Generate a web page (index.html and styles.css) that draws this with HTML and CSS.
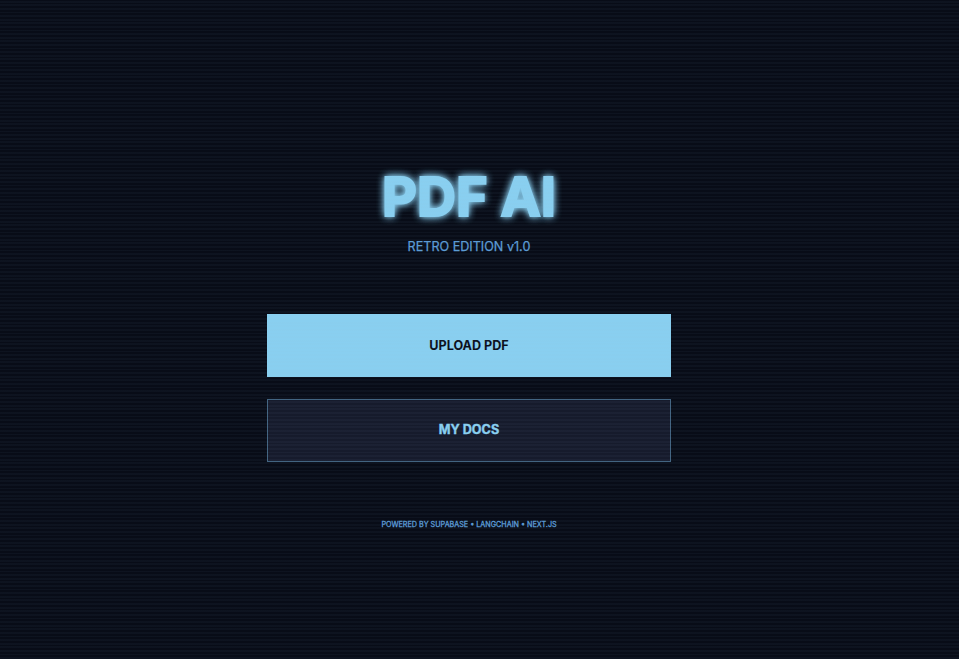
FILE: index.html
```html
<!DOCTYPE html>
<html lang="en">
<head>
<meta charset="utf-8">
<title>PDF AI</title>
<link rel="stylesheet" href="styles.css">
</head>
<body>
<main class="screen">
  <header class="masthead">
    <h1 class="title">PDF AI</h1>
    <p class="subtitle">RETRO EDITION v1.0</p>
  </header>
  <nav class="actions">
    <button class="btn primary">UPLOAD PDF</button>
    <button class="btn secondary">MY DOCS</button>
  </nav>
  <footer class="credits">POWERED BY SUPABASE • LANGCHAIN • NEXT.JS</footer>
</main>
</body>
</html>
```
FILE: styles.css
```css
* { box-sizing: border-box; }
html, body { margin: 0; height: 100%; overflow: hidden; }
body {
  background: #080c17;
  font-family: Inter, "Liberation Sans", sans-serif;
}
/* Scanlines over the whole screen */
body::after {
  content: "";
  position: fixed;
  inset: 0;
  pointer-events: none;
  background: repeating-linear-gradient(0deg, rgba(150,190,220,.045) 0 1.8px, transparent 1.8px 3.607px);
}
.screen {
  width: 938px;
  height: 100%;
  padding-top: 170px;
  display: flex;
  flex-direction: column;
  align-items: center;
}
.masthead { text-align: center; }
.title {
  margin: 0;
  font-size: 54px;
  line-height: 54px;
  font-weight: 700;
  color: #89cff0;
  -webkit-text-stroke: 2px #89cff0;
  text-shadow: 0 0 9px #89cff0, 0 0 9px #89cff0, 0 0 4px rgba(137,207,240,.6);
}
.subtitle {
  margin: 14px 0 0;
  font-size: 12.6px;
  line-height: 18px;
  color: #5b9bd5;
  -webkit-text-stroke: .25px #5b9bd5;
}
.actions {
  width: 404px;
  margin-top: 58px;
  display: grid;
  gap: 22px;
}
.btn {
  height: 63px;
  padding: 0;
  border: 1px solid #89cff0;
  font: 700 12.6px/18px Inter, "Liberation Sans", sans-serif;
}
.primary { background: #89cff0; color: #0a0e1a; }
.secondary {
  padding-bottom: 2px;
  background: #161b2c;
  color: #89cff0;
  border-color: #426481;
  -webkit-text-stroke: .4px #89cff0;
}
.credits {
  margin-top: 57px;
  font-size: 7.2px;
  line-height: 11px;
  color: #5b9bd5;
  -webkit-text-stroke: .3px #5b9bd5;
}
```
